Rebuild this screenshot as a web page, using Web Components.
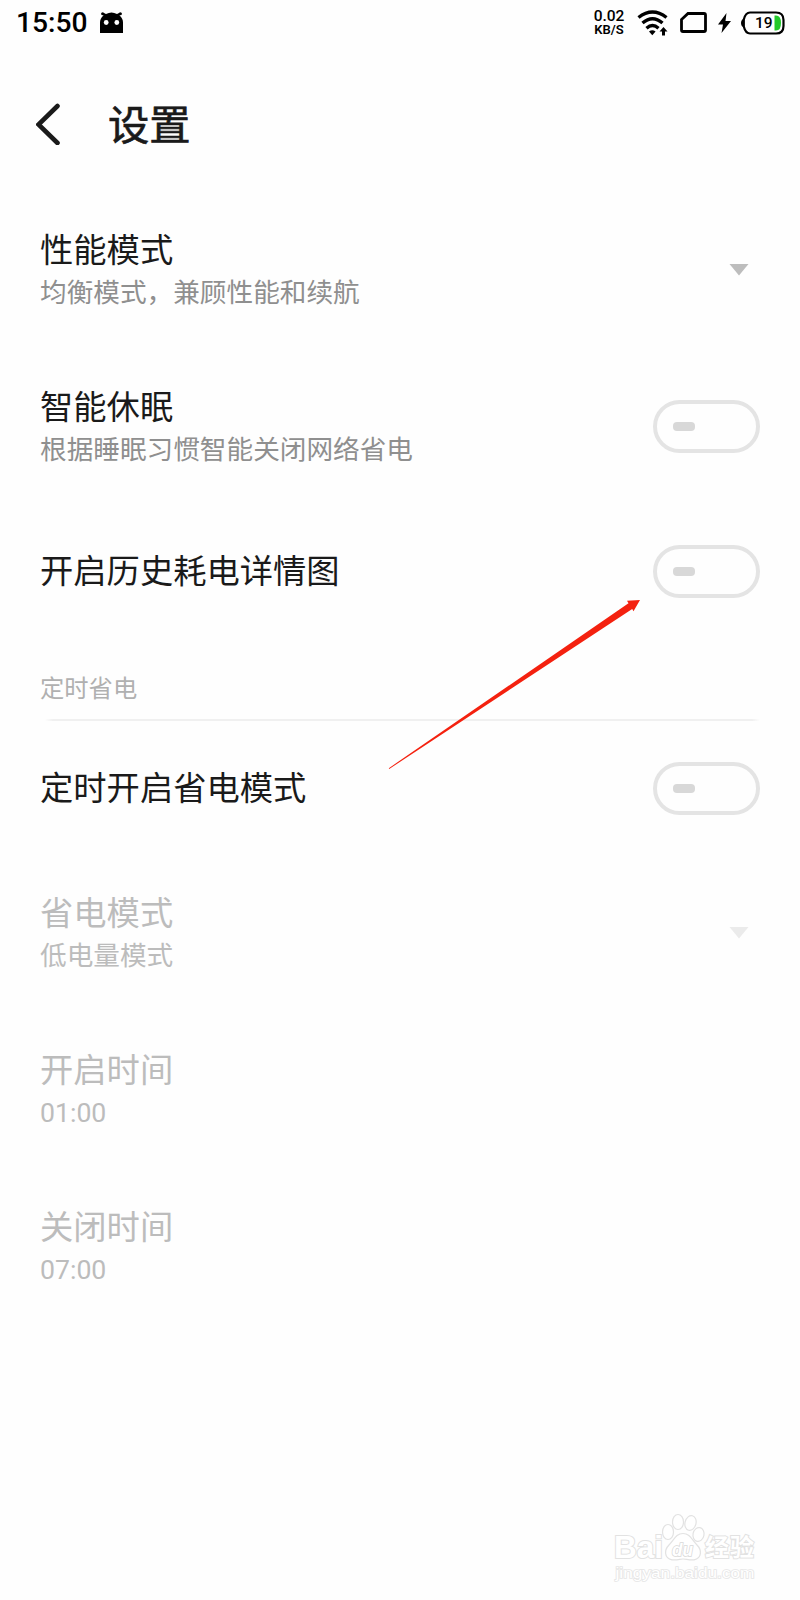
<!DOCTYPE html>
<html lang="zh-CN">
<head>
<meta charset="utf-8">
<title>设置</title>
<style>
  body {
    margin: 0;
    background: #fefefe;
    font-family: Roboto, "Noto Sans CJK SC", sans-serif;
    color: #1a1a1a;
  }
</style>
</head>
<body>
<settings-page>
  <status-bar slot="status" time="15:50" rate="0.02" unit="KB/S" battery="19"></status-bar>
  <page-header slot="header">设置</page-header>

  <setting-row>
    性能模式
    <span slot="summary">均衡模式，兼顾性能和续航</span>
    <drop-arrow slot="control"></drop-arrow>
  </setting-row>
  <setting-row>
    智能休眠
    <span slot="summary">根据睡眠习惯智能关闭网络省电</span>
    <toggle-switch slot="control"></toggle-switch>
  </setting-row>
  <setting-row single>
    开启历史耗电详情图
    <toggle-switch slot="control"></toggle-switch>
  </setting-row>

  <section-title>定时省电</section-title>

  <setting-row single>
    定时开启省电模式
    <toggle-switch slot="control"></toggle-switch>
  </setting-row>
  <setting-row disabled>
    省电模式
    <span slot="summary">低电量模式</span>
    <drop-arrow slot="control" disabled></drop-arrow>
  </setting-row>
  <setting-row disabled>
    开启时间
    <span slot="summary">01:00</span>
  </setting-row>
  <setting-row disabled>
    关闭时间
    <span slot="summary">07:00</span>
  </setting-row>

  <pointer-arrow slot="overlay"></pointer-arrow>
  <water-mark slot="overlay"></water-mark>
</settings-page>

<script>
// Page shell: status bar, header, list of rows
class SettingsPage extends HTMLElement {
  constructor() {
    super();
    this.attachShadow({ mode: "open" });
    this.shadowRoot.innerHTML = `
      <style>
        :host {
          display: flex;
          flex-direction: column;
          position: relative;
          width: 800px;
          height: 1600px;
          overflow: hidden;
        }

        main {
          display: flex;
          flex-direction: column;
          padding: 0 40px;
        }
      </style>
      <slot name="status"></slot>
      <slot name="header"></slot>
      <main><slot></slot></main>
      <slot name="overlay"></slot>
    `;
  }
}

class StatusBar extends HTMLElement {
  constructor() {
    super();
    this.attachShadow({ mode: "open" });
    this.shadowRoot.innerHTML = `
      <style>
        :host {
          display: flex;
          align-items: center;
          justify-content: space-between;
          box-sizing: border-box;
          height: 45px;
          padding: 0 14px 0 16px;
          color: #000;
        }

        .side {
          display: flex;
          align-items: center;
        }

        .time {
          font-size: 28.2px;
          font-weight: 500;
          line-height: 45px;
        }

        .speed {
          display: flex;
          flex-direction: column;
          align-items: center;
          width: 32px;
          font-weight: 500;
          line-height: 13px;
          white-space: nowrap;
        }

        .rate { font-size: 15.5px; }
        .unit { font-size: 13px; font-weight: 600; }

        svg {
          display: block;
          overflow: visible;
        }

        .battery {
          display: grid;
          width: 46px;
          height: 24px;
        }

        .battery > * { grid-area: 1 / 1; }

        .level {
          padding-left: 15px;
          font-size: 15.5px;
          font-weight: 500;
          line-height: 24px;
        }
      </style>
      <div class="side">
        <span class="time"></span>
        <svg style="margin-left:12px" width="23" height="21" viewBox="0 0 23 21">
          <path d="M0 21V10.500Q0 6.500 3.500 3.500L2 2 3.500 .8 6 2Q11.500 -1 17 2L19.500 .8 21 2 19.500 3.500Q23 6.500 23 10.500V21Z"/>
          <circle cx="2.600" cy="1.800" r="1.500"/>
          <circle cx="20.400" cy="1.800" r="1.500"/>
          <circle cx="6.200" cy="10.500" r="2.400" fill="#fff"/>
          <circle cx="16.800" cy="10.500" r="2.400" fill="#fff"/>
        </svg>
      </div>
      <div class="side">
        <span class="speed"><span class="rate"></span><span class="unit"></span></span>
        <svg style="margin-left:12px" width="32" height="26" viewBox="0 0 32 26">
          <g fill="none" stroke="#000" stroke-width="3.4">
            <path d="M1.5 7.5Q15.500 -3.5 29.500 7.500"/>
            <path d="M5.500 13Q15.500 4.500 25.500 13"/>
            <path d="M9.500 18.200Q15.500 13 21.500 18.200"/>
          </g>
          <path d="M12 21.500Q15.300 19 18.600 21.500L15.300 25.200Z"/>
          <path d="M26.500 17L30.500 21.500H28V25.500H25V21.500H22.500Z"/>
        </svg>
        <svg style="margin-left:11px" width="27" height="21" viewBox="0 0 27 21">
          <path d="M8 1.500H24Q25.500 1.500 25.500 3V18Q25.500 19.500 24 19.500H3Q1.500 19.500 1.500 18V7.500Z" fill="none" stroke="#000" stroke-width="2.800"/>
        </svg>
        <svg style="margin-left:11px" width="13" height="20" viewBox="0 0 13 20">
          <path d="M8.500 0L0 11.500H5L3.500 20 13 8H7.500Z"/>
        </svg>
        <div class="battery" style="margin-left:9px">
          <svg width="46" height="24" viewBox="0 0 46 24">
            <path d="M4 7.500Q1 8.500 1 12T4 16.500Z"/>
            <path d="M36 4.500Q41 4.500 41 12T36 19.500H34.500V4.500Z" fill="#22c92b"/>
            <path d="M10 1.500H36Q43.500 1.500 43.500 9V15Q43.500 22.500 36 22.500H10Q5.500 22.500 3.800 15.500V8.500Q5.500 1.500 10 1.500Z" fill="none" stroke="#000" stroke-width="2.200"/>
          </svg>
          <span class="level"></span>
        </div>
      </div>
    `;
  }

  connectedCallback() {
    const root = this.shadowRoot;
    root.querySelector(".time").textContent = this.getAttribute("time");
    root.querySelector(".rate").textContent = this.getAttribute("rate");
    root.querySelector(".unit").textContent = this.getAttribute("unit");
    root.querySelector(".level").textContent = this.getAttribute("battery");
  }
}

class PageHeader extends HTMLElement {
  constructor() {
    super();
    this.attachShadow({ mode: "open" });
    this.shadowRoot.innerHTML = `
      <style>
        :host {
          display: flex;
          align-items: center;
          box-sizing: border-box;
          height: 146px;
          padding: 12px 36px 0;
        }

        h1 {
          margin: 3px 0 0 47px;
          font-size: 41.3px;
          font-weight: 400;
          line-height: 60px;
          -webkit-text-stroke: 0.7px currentColor;
        }
      </style>
      <svg width="25" height="42" viewBox="0 0 25 42">
        <path d="M21.500 3L2.500 21.500 21.500 40" fill="none" stroke="#1a1a1a" stroke-width="4.600" stroke-linecap="round"/>
      </svg>
      <h1><slot></slot></h1>
    `;
  }
}

class SettingRow extends HTMLElement {
  constructor() {
    super();
    this.attachShadow({ mode: "open" });
    this.shadowRoot.innerHTML = `
      <style>
        :host {
          display: flex;
          align-items: center;
          justify-content: space-between;
          height: 157px;
        }

        :host([single]) { height: 132px; }

        .text { padding-top: 4px; }

        :host([single]) .text { padding-top: 1px; }

        .title {
          font-size: 33.3px;
          line-height: 42px;
        }

        .summary {
          font-size: 26.65px;
          line-height: 42px;
          color: #8f8f8f;
        }

        :host([single]) .summary { display: none; }

        :host([disabled]) .title,
        :host([disabled]) .summary {
          color: #bcbcbc;
        }
      </style>
      <div class="text">
        <div class="title"><slot></slot></div>
        <div class="summary"><slot name="summary"></slot></div>
      </div>
      <slot name="control"></slot>
    `;
  }
}

class SectionTitle extends HTMLElement {
  constructor() {
    super();
    this.attachShadow({ mode: "open" });
    this.shadowRoot.innerHTML = `
      <style>
        :host {
          display: flex;
          flex-direction: column;
          justify-content: flex-end;
          height: 85px;
          font-size: 24.3px;
          line-height: 36px;
          color: #b0b0b0;
        }

        .line {
          height: 2px;
          margin: 12px 0 1px 5px;
          background: linear-gradient(90deg, transparent, #f0f0f0 8px, #f0f0f0 calc(100% - 8px), transparent);
        }
      </style>
      <slot></slot>
      <div class="line"></div>
    `;
  }
}

class ToggleSwitch extends HTMLElement {
  constructor() {
    super();
    this.attachShadow({ mode: "open" });
    this.shadowRoot.innerHTML = `
      <style>
        :host {
          display: flex;
          align-items: center;
          box-sizing: border-box;
          width: 107px;
          height: 53px;
          padding-left: 16px;
          border: 4px solid #e4e4e4;
          border-radius: 27px;
        }

        .knob {
          width: 22px;
          height: 9px;
          border-radius: 4px;
          background: #d8d8d8;
        }
      </style>
      <div class="knob"></div>
    `;
  }
}

class DropArrow extends HTMLElement {
  constructor() {
    super();
    this.attachShadow({ mode: "open" });
    this.shadowRoot.innerHTML = `
      <style>
        :host {
          display: block;
          margin-right: 11px;
          color: #bdbdbd;
        }

        :host([disabled]) { color: #ebebeb; }

        svg { display: block; }
      </style>
      <svg width="20" height="12" viewBox="0 0 20 12">
        <path d="M0.500 0H19.500L10 11.500Z" fill="currentColor"/>
      </svg>
    `;
  }
}

// Red arrow drawn over the list
class PointerArrow extends HTMLElement {
  constructor() {
    super();
    this.attachShadow({ mode: "open" });
    this.shadowRoot.innerHTML = `
      <style>
        :host {
          display: block;
          position: absolute;
          left: 388px;
          top: 600px;
        }

        svg { display: block; }
      </style>
      <svg width="253" height="170" viewBox="0 0 253 170">
        <path d="M0.800 168.200L240.500 3.200 239 0.800 252 0 245.500 11.200 244.200 9 1.200 169Z" fill="#f4210f"/>
      </svg>
    `;
  }
}

class WaterMark extends HTMLElement {
  constructor() {
    super();
    this.attachShadow({ mode: "open" });
    this.shadowRoot.innerHTML = `
      <style>
        :host {
          display: block;
          position: absolute;
          left: 610px;
          top: 1510px;
        }

        svg {
          display: block;
          overflow: visible;
        }
      </style>
      <svg width="150" height="75" viewBox="0 0 150 75" fill="#fff" stroke="#e2e2e2" stroke-width="1.200">
        <g font-weight="700" paint-order="stroke" stroke-width="2">
          <text x="4" y="48" font-size="31" textLength="49" lengthAdjust="spacingAndGlyphs" font-family="'Liberation Sans', sans-serif">Bai</text>
          <text x="95" y="46" font-size="24" textLength="49" font-family="'Noto Sans CJK SC', sans-serif">经验</text>
        </g>
        <ellipse cx="58" cy="22" rx="5.500" ry="7.500"/>
        <ellipse cx="68" cy="12" rx="5.500" ry="7.500"/>
        <ellipse cx="80.500" cy="13" rx="5.500" ry="7.500" transform="rotate(15 80.500 13)"/>
        <ellipse cx="88.500" cy="24.500" rx="5.500" ry="7" transform="rotate(12 88.500 24.500)"/>
        <path d="M73 23.500C66 23.500 64 30 59 35C54 40 54 48 62 49.800C67 50.500 70 49 73 49S80 50.500 84 49.800C92 48 92 40 87 35C82 30 80 23.500 73 23.500Z"/>
        <text x="62" y="46" font-size="19" font-family="'Liberation Sans', sans-serif" font-style="italic" font-weight="700" textLength="21" lengthAdjust="spacingAndGlyphs" paint-order="stroke" stroke="#d8d8d8" stroke-width="1.600">du</text>
        <text x="5.500" y="68" font-size="15.500" font-family="'Liberation Sans', sans-serif" textLength="139" lengthAdjust="spacingAndGlyphs" paint-order="stroke" stroke="#e6e6e6" stroke-width="1.600">jingyan.baidu.com</text>
      </svg>
    `;
  }
}

customElements.define("settings-page", SettingsPage);
customElements.define("status-bar", StatusBar);
customElements.define("page-header", PageHeader);
customElements.define("setting-row", SettingRow);
customElements.define("section-title", SectionTitle);
customElements.define("toggle-switch", ToggleSwitch);
customElements.define("drop-arrow", DropArrow);
customElements.define("pointer-arrow", PointerArrow);
customElements.define("water-mark", WaterMark);
</script>
</body>
</html>
